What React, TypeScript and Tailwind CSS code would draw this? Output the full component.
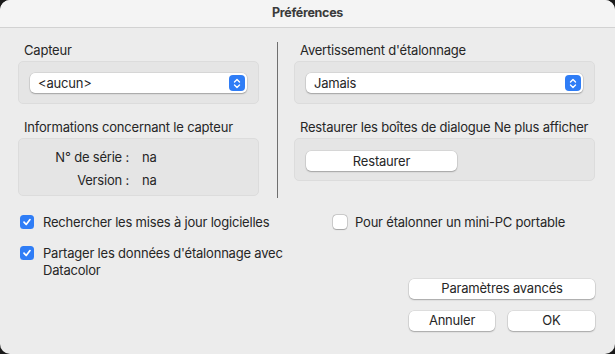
import React from "react";

const font = { fontFamily: "Inter, 'Noto Sans', sans-serif" };

const Stepper: React.FC = () => (
  <span className="flex h-[16px] w-[16px] items-center justify-center rounded-[4px] bg-[#2f7df6]">
    <svg width="8" height="11" viewBox="0 0 8 11" fill="none">
      <path d="M1.5 4 L4 1.5 L6.5 4" stroke="white" strokeWidth="1.4" strokeLinecap="round" strokeLinejoin="round" />
      <path d="M1.5 7 L4 9.5 L6.5 7" stroke="white" strokeWidth="1.4" strokeLinecap="round" strokeLinejoin="round" />
    </svg>
  </span>
);

const Select: React.FC<{ value: string }> = ({ value }) => (
  <div className="flex h-[20px] items-center justify-between rounded-[5px] bg-white pl-[8px] pr-[2px] shadow-[0_0_0_0.5px_rgba(0,0,0,0.12),0_1px_1.5px_rgba(0,0,0,0.25)]">
    <span className="text-[13px] text-[#262626]">{value}</span>
    <Stepper />
  </div>
);

const Button: React.FC<{ label: string; className?: string }> = ({ label, className }) => (
  <div
    className={
      "flex h-[20px] items-center justify-center rounded-[5px] bg-white text-[13px] text-[#262626] shadow-[0_0_0_0.5px_rgba(0,0,0,0.12),0_1px_1.5px_rgba(0,0,0,0.25)] " +
      (className ?? "")
    }
  >
    {label}
  </div>
);

const Checkbox: React.FC<{ checked: boolean }> = ({ checked }) =>
  checked ? (
    <span className="mt-[1px] flex h-[14px] w-[14px] shrink-0 items-center justify-center rounded-[3.5px] bg-[#2f7df6]">
      <svg width="10" height="10" viewBox="0 0 10 10" fill="none">
        <path d="M2 5.2 L4.2 7.5 L8 2.6" stroke="white" strokeWidth="1.7" strokeLinecap="round" strokeLinejoin="round" />
      </svg>
    </span>
  ) : (
    <span className="mt-[1px] h-[14px] w-[14px] shrink-0 rounded-[3.5px] bg-white shadow-[0_0_0_0.5px_rgba(0,0,0,0.25),0_0.5px_1px_rgba(0,0,0,0.2)]" />
  );

const Group: React.FC<{ className?: string; children: React.ReactNode }> = ({ className, children }) => (
  <div className={"rounded-[5px] border border-[#dcdcdc] bg-[#e5e5e5] " + (className ?? "")}>{children}</div>
);

export default function App() {
  return (
    <div className="h-[354px] w-[615px] bg-[#1a1a1a]" style={font}>
      <div className="flex h-[354px] w-[615px] flex-col overflow-hidden rounded-[10px] bg-[#ececec] tracking-[-0.2px]">
        <div className="flex h-[28px] shrink-0 items-center justify-center border-b border-[#d2d2d2] bg-[#f4f4f4] text-[12.5px] font-bold tracking-[-0.3px] text-[#3b3b3b]">
          Préférences
        </div>

        <div className="flex pl-[18px] pt-[14px] text-[13px] leading-[16px] text-[#262626]">
          <div className="w-[241px]">
            <div className="pl-[6px]">Capteur</div>
            <Group className="mt-[3px] h-[43px] px-[11px] pt-[11px]">
              <Select value="<aucun>" />
            </Group>
            <div className="mt-[15px] pl-[6px]">Informations concernant le capteur</div>
            <Group className="mt-[3px] h-[58px] pt-[10px]">
              <div className="grid grid-cols-[110px_1fr] gap-x-[13px] gap-y-[7px]">
                <span className="text-right">N° de série :</span>
                <span>na</span>
                <span className="text-right">Version :</span>
                <span>na</span>
              </div>
            </Group>
          </div>

          <div className="ml-[18px] h-[156px] w-[1px] bg-[#6f6f6f]" />

          <div className="ml-[16px] w-[301px]">
            <div className="whitespace-nowrap pl-[6px]">Avertissement d'étalonnage</div>
            <Group className="mt-[3px] h-[43px] px-[11px] pt-[11px]">
              <Select value="Jamais" />
            </Group>
            <div className="mt-[15px] whitespace-nowrap pl-[6px]">Restaurer les boîtes de dialogue Ne plus afficher</div>
            <Group className="mt-[3px] h-[43px] px-[11px] pt-[12px]">
              <Button label="Restaurer" className="w-[151px]" />
            </Group>
          </div>
        </div>

        <div className="mt-[16px] flex text-[13px] leading-[17px] text-[#262626]">
          <div className="ml-[20px] flex w-[313px] flex-col gap-[14px]">
            <div className="flex gap-[9px]">
              <Checkbox checked />
              <span>Rechercher les mises à jour logicielles</span>
            </div>
            <div className="flex gap-[9px]">
              <Checkbox checked />
              <span className="w-[250px]">Partager les données d'étalonnage avec Datacolor</span>
            </div>
          </div>
          <div className="flex h-[17px] gap-[8px]">
            <Checkbox checked={false} />
            <span>Pour étalonner un mini-PC portable</span>
          </div>
        </div>

        <div className="mt-[0px] flex flex-col items-end gap-[12px] pr-[20px]">
          <Button label="Paramètres avancés" className="w-[186px]" />
          <div className="flex gap-[13px]">
            <Button label="Annuler" className="w-[86px]" />
            <Button label="OK" className="w-[87px]" />
          </div>
        </div>
      </div>
    </div>
  );
}
